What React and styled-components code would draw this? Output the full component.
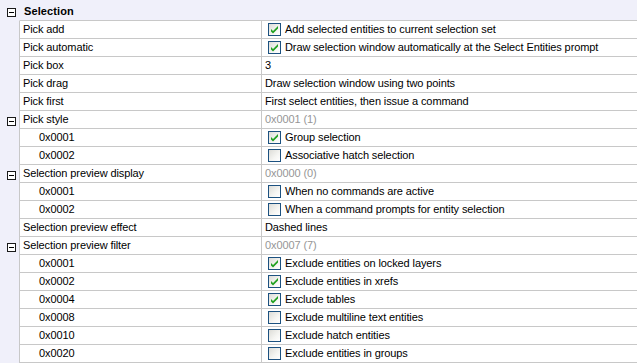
import React from 'react'
import styled, { createGlobalStyle } from 'styled-components'

const GlobalStyle = createGlobalStyle`
  html, body {
    margin: 0;
    padding: 0;
    background: #ffffff;
  }
  body {
    font-family: Tahoma, "Liberation Sans", Arial, sans-serif;
    font-size: 11px;
    color: #000000;
  }
`

const gutter = '#f0f0fa'
const line = '#c8c8c8'

const Grid = styled.div`
  width: 637px;
  display: flex;
  flex-direction: column;
  background: ${gutter};
`

const Row = styled.div`
  display: flex;
  height: ${p => (p.$category ? 21 : 18)}px;
`

const Gutter = styled.div`
  width: 19px;
  flex: none;
  display: flex;
  justify-content: flex-start;
  align-items: flex-start;
  padding: ${p => (p.$category ? 8 : 6)}px 0 0 7px;
  box-sizing: border-box;
`

const Toggle = styled.span`
  width: 9px;
  height: 9px;
  box-sizing: border-box;
  border: 1px solid #1a1a1a;
  background: #ffffff;
  position: relative;
  &::after {
    content: '';
    position: absolute;
    left: 1px;
    top: 3px;
    width: 5px;
    height: 1px;
    background: #000000;
  }
`

const Cells = styled.div`
  flex: 1;
  display: flex;
  border-bottom: 1px solid ${line};
  border-left: 1px solid ${p => (p.$category ? gutter : line)};
  background: ${p => (p.$category ? gutter : '#ffffff')};
`

const Title = styled.div`
  font-weight: bold;
  padding: 4px 0 0 4px;
  line-height: 14px;
  letter-spacing: 0.1px;
`

const Name = styled.div`
  width: 242px;
  flex: none;
  border-right: 1px solid ${line};
  padding-left: ${p => (p.$sub ? 19 : 3)}px;
  line-height: 17px;
  box-sizing: border-box;
  white-space: nowrap;
  letter-spacing: -0.1px;
`

const Value = styled.div`
  flex: 1;
  display: flex;
  align-items: center;
  gap: 4px;
  padding-left: ${p => (p.$check ? 6 : 3)}px;
  line-height: 17px;
  color: ${p => (p.$muted ? '#969696' : '#000000')};
  white-space: nowrap;
  overflow: hidden;
  letter-spacing: -0.1px;
`

const Box = styled.span`
  width: 13px;
  height: 13px;
  flex: none;
  box-sizing: border-box;
  border: 1px solid #1c5180;
  background: linear-gradient(135deg, #dcdcd7 0%, #f5f5f2 60%, #ffffff 100%);
  display: flex;
  align-items: center;
  justify-content: center;
`

const Check = ({ on }) => (
  <Box>
    {on && (
      <svg width="9" height="9" viewBox="0 0 9 9">
        <path d="M1 4 L3 6 L8 1 L8 3.5 L3 8.5 L1 6.5 Z" fill="#21a121" />
      </svg>
    )}
  </Box>
)

const rows = [
  { name: 'Pick add', check: true, text: 'Add selected entities to current selection set' },
  { name: 'Pick automatic', check: true, text: 'Draw selection window automatically at the Select Entities prompt' },
  { name: 'Pick box', text: '3' },
  { name: 'Pick drag', text: 'Draw selection window using two points' },
  { name: 'Pick first', text: 'First select entities, then issue a command' },
  { name: 'Pick style', toggle: true, muted: true, text: '0x0001 (1)' },
  { name: '0x0001', sub: true, check: true, text: 'Group selection' },
  { name: '0x0002', sub: true, check: false, text: 'Associative hatch selection' },
  { name: 'Selection preview display', toggle: true, muted: true, text: '0x0000 (0)' },
  { name: '0x0001', sub: true, check: false, text: 'When no commands are active' },
  { name: '0x0002', sub: true, check: false, text: 'When a command prompts for entity selection' },
  { name: 'Selection preview effect', text: 'Dashed lines' },
  { name: 'Selection preview filter', toggle: true, muted: true, text: '0x0007 (7)' },
  { name: '0x0001', sub: true, check: true, text: 'Exclude entities on locked layers' },
  { name: '0x0002', sub: true, check: true, text: 'Exclude entities in xrefs' },
  { name: '0x0004', sub: true, check: true, text: 'Exclude tables' },
  { name: '0x0008', sub: true, check: false, text: 'Exclude multiline text entities' },
  { name: '0x0010', sub: true, check: false, text: 'Exclude hatch entities' },
  { name: '0x0020', sub: true, check: false, text: 'Exclude entities in groups' },
]

export default function App() {
  return (
    <>
      <GlobalStyle />
      <Grid>
        <Row $category>
          <Gutter $category>
            <Toggle />
          </Gutter>
          <Cells $category>
            <Title>Selection</Title>
          </Cells>
        </Row>
        {rows.map((r, i) => {
          const hasCheck = r.check !== undefined
          return (
            <Row key={i}>
              <Gutter>{r.toggle && <Toggle />}</Gutter>
              <Cells>
                <Name $sub={r.sub}>{r.name}</Name>
                <Value $check={hasCheck} $muted={r.muted}>
                  {hasCheck && <Check on={r.check} />}
                  {r.text}
                </Value>
              </Cells>
            </Row>
          )
        })}
      </Grid>
    </>
  )
}
